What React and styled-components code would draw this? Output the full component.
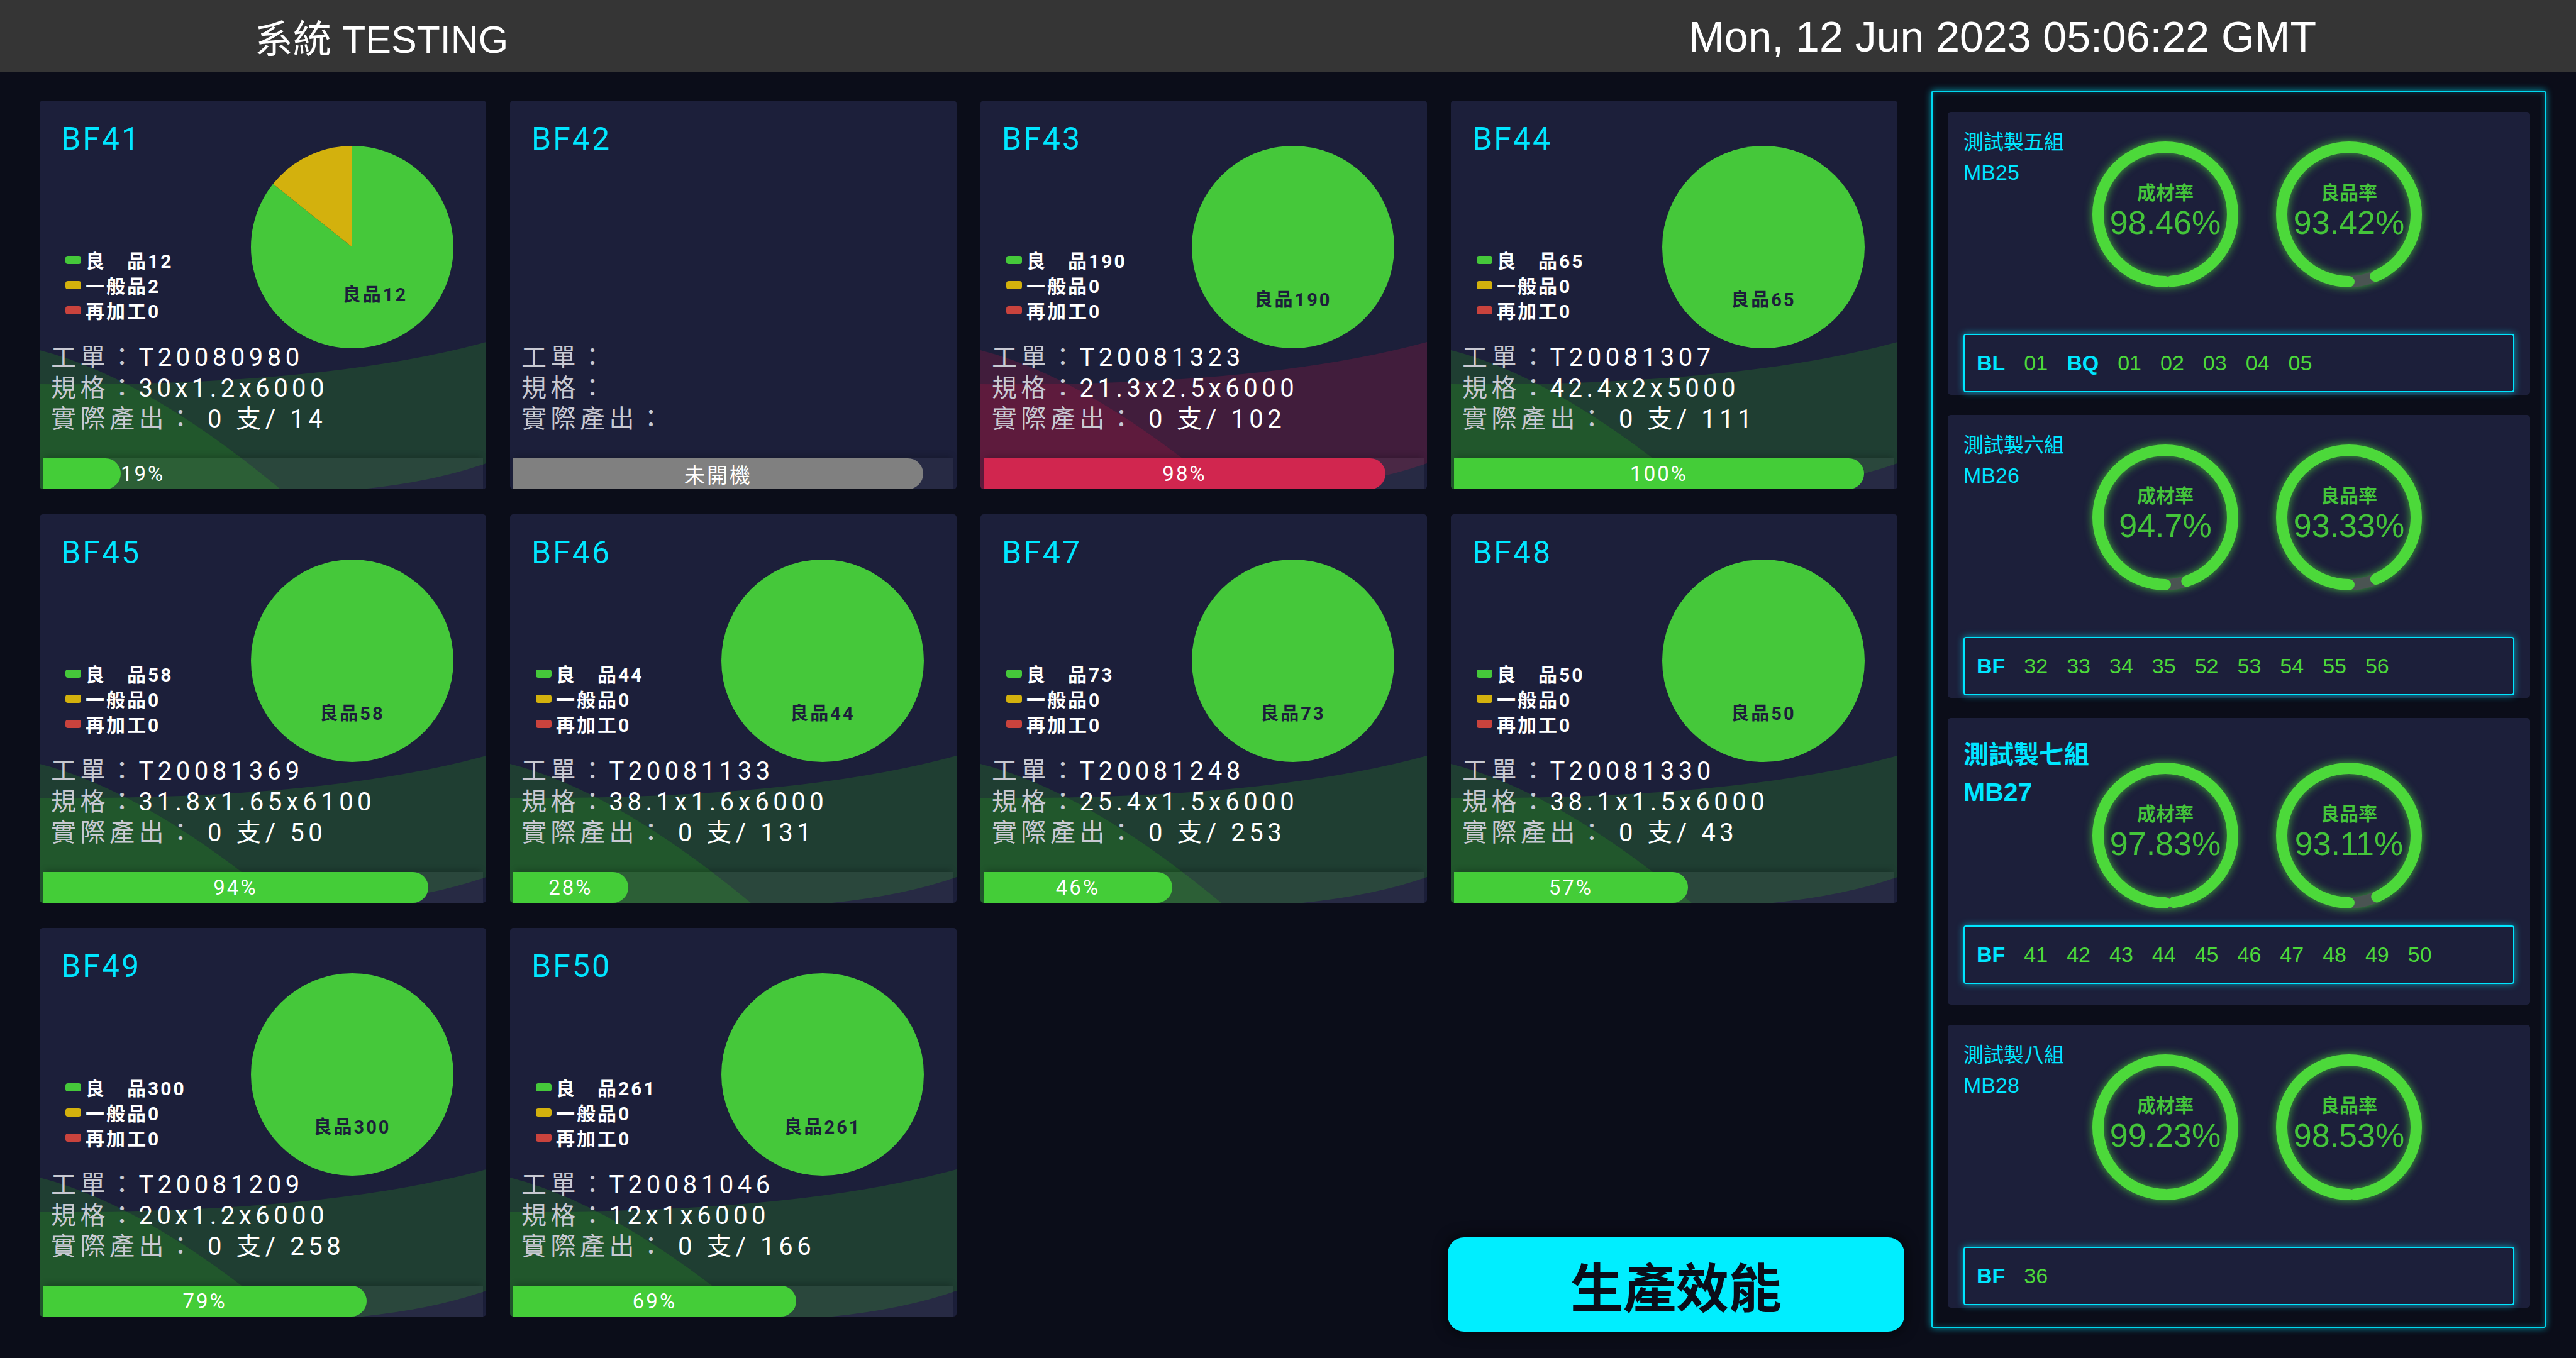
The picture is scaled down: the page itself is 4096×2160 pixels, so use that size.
import React from 'react';
import styled, { createGlobalStyle } from 'styled-components';

const GlobalStyle = createGlobalStyle`
  html, body {
    margin: 0;
    padding: 0;
    background: #0b0d19;
  }
  * { box-sizing: border-box; }
`;

const machines = [
  { id: 'BF41', values: [12, 2, 0], order: 'T20080980', spec: '30x1.2x6000', out: '0 支/ 14', pct: 19, tone: 'green' },
  { id: 'BF42', off: true },
  { id: 'BF43', values: [190, 0, 0], order: 'T20081323', spec: '21.3x2.5x6000', out: '0 支/ 102', pct: 98, tone: 'red' },
  { id: 'BF44', values: [65, 0, 0], order: 'T20081307', spec: '42.4x2x5000', out: '0 支/ 111', pct: 100, tone: 'green' },
  { id: 'BF45', values: [58, 0, 0], order: 'T20081369', spec: '31.8x1.65x6100', out: '0 支/ 50', pct: 94, tone: 'green' },
  { id: 'BF46', values: [44, 0, 0], order: 'T20081133', spec: '38.1x1.6x6000', out: '0 支/ 131', pct: 28, tone: 'green' },
  { id: 'BF47', values: [73, 0, 0], order: 'T20081248', spec: '25.4x1.5x6000', out: '0 支/ 253', pct: 46, tone: 'green' },
  { id: 'BF48', values: [50, 0, 0], order: 'T20081330', spec: '38.1x1.5x6000', out: '0 支/ 43', pct: 57, tone: 'green' },
  { id: 'BF49', values: [300, 0, 0], order: 'T20081209', spec: '20x1.2x6000', out: '0 支/ 258', pct: 79, tone: 'green' },
  { id: 'BF50', values: [261, 0, 0], order: 'T20081046', spec: '12x1x6000', out: '0 支/ 166', pct: 69, tone: 'green' },
];

const groups = [
  { name: '測試製五組', code: 'MB25', yieldRate: 98.46, goodRate: 93.42, lines: [['BL', ['01']], ['BQ', ['01', '02', '03', '04', '05']]] },
  { name: '測試製六組', code: 'MB26', yieldRate: 94.7, goodRate: 93.33, lines: [['BF', ['32', '33', '34', '35', '52', '53', '54', '55', '56']]] },
  { name: '測試製七組', code: 'MB27', yieldRate: 97.83, goodRate: 93.11, active: true, lines: [['BF', ['41', '42', '43', '44', '45', '46', '47', '48', '49', '50']]] },
  { name: '測試製八組', code: 'MB28', yieldRate: 99.23, goodRate: 98.53, lines: [['BF', ['36']]] },
];

const PIE_COLORS = ['#45c83a', '#d3b10d', '#c9433d'];
const LEGEND = ['良\u3000品', '一般品', '再加工'];
const TONES = {
  green: { wave: 'rgba(45, 190, 20, 0.2)', bar: '#44cd38' },
  red: { wave: 'rgba(200, 25, 70, 0.22)', bar: '#d1264f' },
};
const BAR_FULL = 652;

const polar = (c, r, deg) => {
  const a = (deg * Math.PI) / 180;
  return [c + r * Math.sin(a), c - r * Math.cos(a)];
};

const Pie = ({ values }) => {
  const R = 161;
  const total = values.reduce((a, b) => a + b, 0);
  let start = 0;
  const slices = values.map((v, i) => {
    const sweep = (v / total) * 360;
    const from = start;
    start += sweep;
    if (v === 0) return null;
    if (sweep >= 359.99) return <circle key={i} cx={R} cy={R} r={R} fill={PIE_COLORS[i]} />;
    const [x1, y1] = polar(R, R, from);
    const [x2, y2] = polar(R, R, from + sweep);
    const d = `M${R},${R} L${x1},${y1} A${R},${R} 0 ${sweep > 180 ? 1 : 0} 1 ${x2},${y2} Z`;
    return <path key={i} d={d} fill={PIE_COLORS[i]} />;
  });
  const mid = ((values[0] / total) * 360) / 2;
  const [tx, ty] = polar(R, 84, mid);
  return (
    <PieBox viewBox="0 0 322 322">
      {slices}
      <PieLabel x={tx} y={ty} textAnchor="middle" dominantBaseline="central">
        良品{values[0]}
      </PieLabel>
    </PieBox>
  );
};

const Waves = ({ color }) => (
  <WaveLayer viewBox="0 0 710 618" preserveAspectRatio="none">
    <path d="M0,451 Q450,455 710,384 L710,577 Q600,616 430,624 L0,624 Z" fill={color} />
    <path d="M0,397 Q170,440 390,624 L0,624 Z" fill={color} />
  </WaveLayer>
);

const MachineCard = ({ m }) => {
  const tone = m.off ? null : TONES[m.tone];
  const width = m.off ? BAR_FULL : (m.pct / 100) * BAR_FULL;
  const inside = m.off || m.pct >= 25;
  return (
    <Card>
      {tone && <Waves color={tone.wave} />}
      <CardBody>
        <CardHead>
          <HeadLeft>
            <Title>{m.id}</Title>
            {!m.off && (
              <Legend>
                {m.values.map((v, i) => (
                  <LegendRow key={i}>
                    <Swatch $color={PIE_COLORS[i]} />
                    {LEGEND[i]}{v}
                  </LegendRow>
                ))}
              </Legend>
            )}
          </HeadLeft>
          {!m.off && <Pie values={m.values} />}
        </CardHead>
        <Info>
          <InfoLine><InfoLabel>工單：</InfoLabel>{m.order}</InfoLine>
          <InfoLine><InfoLabel>規格：</InfoLabel>{m.spec}</InfoLine>
          <InfoLine><InfoLabel>實際產出：</InfoLabel>{m.out ? ` ${m.out}` : ''}</InfoLine>
        </Info>
        <BarTrack>
          <BarFill $width={width} $color={m.off ? '#808080' : tone.bar}>
            {inside && <BarText>{m.off ? '未開機' : `${m.pct}%`}</BarText>}
          </BarFill>
          {!inside && <BarText>{m.pct}%</BarText>}
        </BarTrack>
      </CardBody>
    </Card>
  );
};

const Ring = ({ label, value }) => {
  const r = 107;
  const c = 2 * Math.PI * r;
  return (
    <RingWrap>
      <RingSvg viewBox="0 0 232 232">
        <circle cx="116" cy="116" r={r} fill="none" stroke="#4a5452" strokeWidth="18" />
        <circle
          cx="116"
          cy="116"
          r={r}
          fill="none"
          stroke="#4cd93a"
          strokeWidth="18"
          strokeLinecap="round"
          strokeDasharray={`${(value / 100) * c} ${c}`}
          transform="rotate(90 116 116)"
        />
      </RingSvg>
      <RingText>
        <RingLabel>{label}</RingLabel>
        <RingValue>{value}%</RingValue>
      </RingText>
    </RingWrap>
  );
};

const GroupCard = ({ g }) => (
  <Group $active={g.active}>
    <GroupTop>
      <GroupName $active={g.active}>
        <div>{g.name}</div>
        <GroupCode $active={g.active}>{g.code}</GroupCode>
      </GroupName>
      <Rings $active={g.active}>
        <Ring label="成材率" value={g.yieldRate} />
        <Ring label="良品率" value={g.goodRate} />
      </Rings>
    </GroupTop>
    <LineBox>
      {g.lines.map(([prefix, nums]) => (
        <React.Fragment key={prefix}>
          <LinePrefix>{prefix}</LinePrefix>
          {nums.map((n) => (
            <LineNum key={prefix + n}>{n}</LineNum>
          ))}
        </React.Fragment>
      ))}
    </LineBox>
  </Group>
);

const App = () => (
  <Page>
    <GlobalStyle />
    <Header>
      <HeaderTitle>系統 TESTING</HeaderTitle>
      <HeaderClock>Mon, 12 Jun 2023 05:06:22 GMT</HeaderClock>
    </Header>
    <Main>
      <Grid>
        {machines.map((m) => (
          <MachineCard key={m.id} m={m} />
        ))}
        <ActionCell>
          <ActionButton type="button">生產效能</ActionButton>
        </ActionCell>
      </Grid>
      <Panel>
        {groups.map((g) => (
          <GroupCard key={g.code} g={g} />
        ))}
      </Panel>
    </Main>
  </Page>
);

const Page = styled.div`
  width: 4096px;
  height: 2160px;
  background: #0b0d19;
  display: flex;
  flex-direction: column;
  font-family: Roboto, "Noto Sans CJK TC", sans-serif;
  overflow: hidden;
`;

const Header = styled.header`
  height: 115px;
  flex: none;
  background: #353535;
  color: #fff;
  display: flex;
  align-items: center;
  justify-content: space-between;
  padding: 0 413px 0 405px;
  font-family: "Liberation Sans", "Noto Sans CJK TC", sans-serif;
`;

const HeaderTitle = styled.div`
  font-size: 61px;
`;

const HeaderClock = styled.div`
  font-size: 68px;
`;

const Main = styled.main`
  flex: 1;
  display: flex;
  align-items: flex-start;
  gap: 54px;
  padding: 29px 48px 0 63px;
`;

const Grid = styled.section`
  margin-top: 16px;
  display: grid;
  grid-template-columns: repeat(4, 710px);
  grid-auto-rows: 618px;
  column-gap: 38px;
  row-gap: 40px;
`;

const Card = styled.article`
  position: relative;
  overflow: hidden;
  background: #1c1f3a;
  border-radius: 5px;
  display: flex;
  flex-direction: column;
`;

const WaveLayer = styled.svg`
  position: absolute;
  inset: 0;
  width: 100%;
  height: 100%;
`;

const CardBody = styled.div`
  position: relative;
  flex: 1;
  display: flex;
  flex-direction: column;
`;

const CardHead = styled.div`
  height: 384px;
  display: flex;
  justify-content: space-between;
`;

const HeadLeft = styled.div`
  display: flex;
  flex-direction: column;
`;

const Title = styled.h2`
  margin: 36px 0 0 34px;
  font-size: 50px;
  line-height: 50px;
  font-weight: 400;
  letter-spacing: 3px;
  color: #00e6ff;
`;

const Legend = styled.ul`
  list-style: none;
  margin: 147px 0 0 41px;
  padding: 0;
`;

const LegendRow = styled.li`
  height: 40px;
  display: flex;
  align-items: center;
  gap: 7px;
  font-size: 30px;
  font-weight: 700;
  letter-spacing: 3px;
  color: #fff;
`;

const Swatch = styled.span`
  width: 25px;
  height: 13px;
  border-radius: 4px;
  background: ${(p) => p.$color};
`;

const PieBox = styled.svg`
  flex: none;
  width: 322px;
  height: 322px;
  margin: 72px 52px 0 0;
  overflow: visible;
`;

const PieLabel = styled.text`
  font-size: 29px;
  font-weight: 700;
  letter-spacing: 3px;
  fill: #1c1f3a;
`;

const Info = styled.div`
  padding-left: 18px;
  font-size: 40px;
  line-height: 49px;
  letter-spacing: 6.5px;
  color: #fff;
  white-space: pre;
`;

const InfoLine = styled.div``;

const InfoLabel = styled.span`
  color: #c8c9d2;
`;

const BarTrack = styled.div`
  margin: auto 5px 0;
  height: 49px;
  display: flex;
  align-items: stretch;
  background: rgba(255, 255, 255, 0.05);
  box-shadow: 0 -7px 9px -3px rgba(0, 0, 0, 0.18);
`;

const BarFill = styled.div`
  width: ${(p) => p.$width}px;
  background: ${(p) => p.$color};
  border-radius: 0 25px 25px 0;
  display: flex;
  align-items: center;
  justify-content: center;
`;

const BarText = styled.span`
  align-self: center;
  font-size: 33px;
  letter-spacing: 3px;
  color: #fff;
`;

const ActionCell = styled.div`
  grid-column: 4;
  display: flex;
  align-items: flex-end;
`;

const ActionButton = styled.button`
  all: unset;
  box-sizing: border-box;
  width: calc(100% + 16px);
  height: 150px;
  margin: 0 -11px -24px -5px;
  background: #00eeff;
  border-radius: 26px;
  display: flex;
  align-items: center;
  justify-content: center;
  font-family: "Noto Sans CJK TC", sans-serif;
  font-size: 84px;
  font-weight: 700;
  color: #0b0d19;
  box-shadow: 0 0 22px rgba(0, 0, 0, 0.8);
`;

const Panel = styled.aside`
  width: 977px;
  height: 1968px;
  border: 2px solid #00d8f0;
  border-radius: 3px;
  box-shadow: 0 0 12px rgba(0, 216, 240, 0.7), inset 0 0 8px rgba(0, 216, 240, 0.3);
  padding: 32px 23px 32px 24px;
  display: flex;
  flex-direction: column;
  gap: 32px;
  font-family: "Liberation Sans", "Noto Sans CJK TC", sans-serif;
`;

const Group = styled.section`
  flex: none;
  height: ${(p) => (p.$active ? 456 : 450)}px;
  background: #1c1f3a;
  border-radius: 5px;
  display: flex;
  flex-direction: column;
  padding: 0 25px ${(p) => (p.$active ? 33 : 4)}px;
`;

const GroupTop = styled.div`
  display: flex;
`;

const GroupName = styled.div`
  width: 205px;
  flex: none;
  padding-top: ${(p) => (p.$active ? 28 : 24)}px;
  color: #00e6ff;
  font-size: ${(p) => (p.$active ? 40 : 32)}px;
  line-height: ${(p) => (p.$active ? 60 : 48)}px;
  font-weight: ${(p) => (p.$active ? 700 : 400)};
`;

const GroupCode = styled.div`
  font-size: ${(p) => (p.$active ? 41 : 34)}px;
`;

const Rings = styled.div`
  display: flex;
  gap: 60px;
  margin-top: ${(p) => (p.$active ? 71 : 47)}px;
`;

const RingWrap = styled.div`
  width: 232px;
  height: 232px;
  display: grid;
  place-items: center;
  & > * {
    grid-area: 1 / 1;
  }
`;

const RingSvg = styled.svg`
  width: 232px;
  height: 232px;
  overflow: visible;
  filter: drop-shadow(0 0 7px rgba(76, 217, 58, 0.75));
`;

const RingText = styled.div`
  display: flex;
  flex-direction: column;
  align-items: center;
  padding-bottom: 14px;
  color: #44c43a;
`;

const RingLabel = styled.div`
  font-family: "Noto Sans CJK TC", sans-serif;
  font-size: 30px;
  line-height: 36px;
  font-weight: 700;
  margin-bottom: 4px;
`;

const RingValue = styled.div`
  font-size: 52px;
  line-height: 56px;
`;

const LineBox = styled.div`
  margin-top: auto;
  height: 93px;
  border: 2px solid #00e6ff;
  border-radius: 4px;
  box-shadow: 0 0 12px rgba(0, 230, 255, 0.6);
  padding: 0 19px;
  display: flex;
  align-items: center;
  gap: 30px;
  font-size: 34px;
`;

const LinePrefix = styled.span`
  font-weight: 700;
  color: #00e6ff;
`;

const LineNum = styled.span`
  color: #4cd93a;
`;

export default App;
